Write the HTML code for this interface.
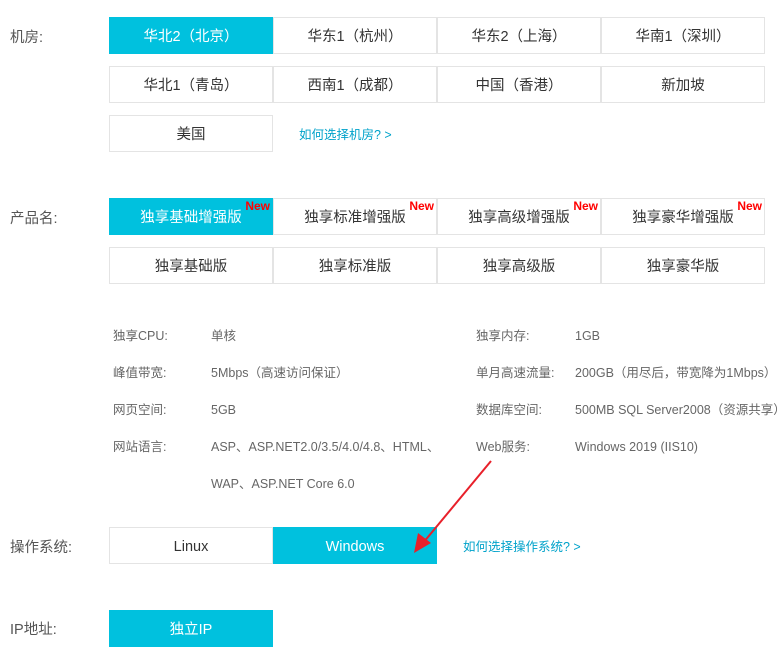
<!DOCTYPE html><html><head><meta charset="utf-8"><style>
body{margin:0;width:780px;height:655px;background:#fff;font-family:"Liberation Sans","Noto Sans CJK SC",sans-serif;position:relative;overflow:hidden}
.b{position:absolute;width:162px;height:35px;border:1px solid #e4e4e4;background:#fff;color:#333;font-size:14.5px;text-align:center;line-height:39px;box-sizing:content-box}
.on{background:#00c1de;border-color:#00c1de;color:#fff}
.l{position:absolute;left:10px;font-size:14.5px;color:#555;line-height:18px}
.a{position:absolute;color:#00a2ca;font-size:12.5px;line-height:16px}
.n{position:absolute;top:0px;right:2px;color:#f00;font-weight:bold;font-size:12px;line-height:14px}
.s{position:absolute;font-size:12.5px;color:#666;line-height:16px;white-space:nowrap}
</style></head><body>
<div class="l" style="top:29px">机房:</div>
<div class="b on" style="left:109px;top:17px">华北2（北京）</div>
<div class="b" style="left:273px;top:17px">华东1（杭州）</div>
<div class="b" style="left:437px;top:17px">华东2（上海）</div>
<div class="b" style="left:601px;top:17px">华南1（深圳）</div>
<div class="b" style="left:109px;top:66px">华北1（青岛）</div>
<div class="b" style="left:273px;top:66px">西南1（成都）</div>
<div class="b" style="left:437px;top:66px">中国（香港）</div>
<div class="b" style="left:601px;top:66px">新加坡</div>
<div class="b" style="left:109px;top:115px">美国</div>
<div class="a" style="left:299px;top:127px">如何选择机房? &gt;</div>
<div class="l" style="top:210px">产品名:</div>
<div class="b on" style="left:109px;top:198px">独享基础增强版<span class="n">New</span></div>
<div class="b" style="left:273px;top:198px">独享标准增强版<span class="n">New</span></div>
<div class="b" style="left:437px;top:198px">独享高级增强版<span class="n">New</span></div>
<div class="b" style="left:601px;top:198px">独享豪华增强版<span class="n">New</span></div>
<div class="b" style="left:109px;top:247px">独享基础版</div>
<div class="b" style="left:273px;top:247px">独享标准版</div>
<div class="b" style="left:437px;top:247px">独享高级版</div>
<div class="b" style="left:601px;top:247px">独享豪华版</div>
<div class="s" style="left:113px;top:328px">独享CPU:</div><div class="s" style="left:211px;top:328px">单核</div>
<div class="s" style="left:476px;top:328px">独享内存:</div><div class="s" style="left:575px;top:328px">1GB</div>
<div class="s" style="left:113px;top:365px">峰值带宽:</div><div class="s" style="left:211px;top:365px">5Mbps（高速访问保证）</div>
<div class="s" style="left:476px;top:365px">单月高速流量:</div><div class="s" style="left:575px;top:365px">200GB（用尽后，带宽降为1Mbps）</div>
<div class="s" style="left:113px;top:402px">网页空间:</div><div class="s" style="left:211px;top:402px">5GB</div>
<div class="s" style="left:476px;top:402px">数据库空间:</div><div class="s" style="left:575px;top:402px">500MB SQL Server2008（资源共享）</div>
<div class="s" style="left:113px;top:439px">网站语言:</div><div class="s" style="left:211px;top:439px">ASP、ASP.NET2.0/3.5/4.0/4.8、HTML、</div>
<div class="s" style="left:476px;top:439px">Web服务:</div><div class="s" style="left:575px;top:439px">Windows 2019 (IIS10)</div>
<div class="s" style="left:211px;top:476px">WAP、ASP.NET Core 6.0</div>
<div class="l" style="top:539px">操作系统:</div>
<div class="b" style="left:109px;top:527px">Linux</div>
<div class="b on" style="left:273px;top:527px">Windows</div>
<div class="a" style="left:463px;top:539px">如何选择操作系统? &gt;</div>
<div class="l" style="top:621px">IP地址:</div>
<div class="b on" style="left:109px;top:610px">独立IP</div>
<svg style="position:absolute;left:0;top:0" width="780" height="655"><line x1="491" y1="461" x2="423" y2="543" stroke="#e8202a" stroke-width="2"/><polygon points="414,553 418,533 431,543" fill="#e8202a"/></svg>
</body></html>
